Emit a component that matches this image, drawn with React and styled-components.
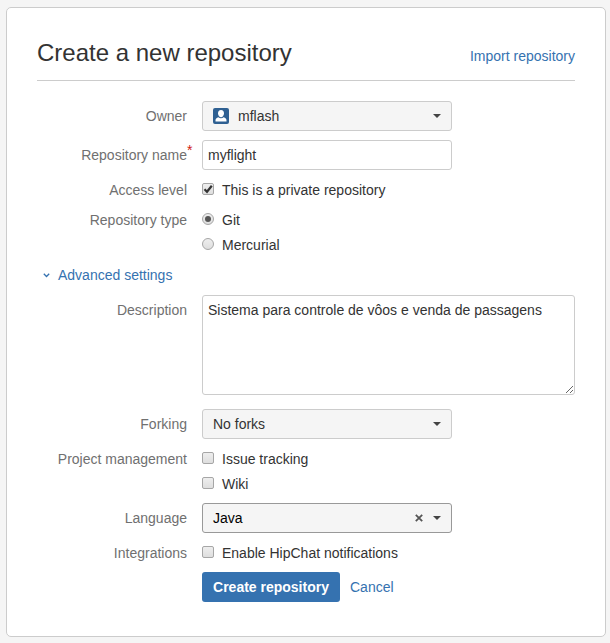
import React from "react";
import styled, { createGlobalStyle } from "styled-components";

const GlobalStyle = createGlobalStyle`
  * { box-sizing: border-box; }
  body {
    margin: 0;
    background: #f5f5f5;
    color: #333;
    font: 14px/20px "Liberation Sans", Arial, sans-serif;
  }
`;

const Page = styled.main`
  height: 643px;
  padding: 7px 4px 0 6px;
  overflow: hidden;
`;

const Card = styled.form`
  height: 630px;
  padding: 0 30px;
  background: #fff;
  border: 1px solid #ccc;
  border-radius: 5px;
`;

const Header = styled.header`
  display: flex;
  justify-content: space-between;
  height: 73px;
  border-bottom: 1px solid #ccc;
  margin-bottom: 20px;
`;

const Title = styled.h1`
  margin: 30px 0 0;
  font-size: 24px;
  font-weight: 400;
  line-height: 30px;
`;

const Link = styled.a`
  color: #3572b0;
  text-decoration: none;
  cursor: pointer;
`;

const HeaderLink = styled(Link)`
  margin-top: 38px;
`;

const Field = styled.div`
  display: grid;
  grid-template-columns: 150px 1fr;
  column-gap: 15px;
  margin-top: ${(p) => p.$space ?? 10}px;
`;

const Label = styled.div`
  position: relative;
  padding-top: ${(p) => p.$inset ?? 0}px;
  color: #707070;
  text-align: right;
  white-space: nowrap;
`;

const Required = styled.span`
  position: absolute;
  left: 100%;
  top: 0;
  color: #d01a10;
`;

const Options = styled.div`
  display: flex;
  flex-direction: column;
  gap: 5px;
`;

const OptionRow = styled.label`
  display: flex;
  align-items: center;
  gap: 8px;
  height: 20px;
`;

const Marker = styled.span`
  display: flex;
  align-items: center;
  justify-content: center;
  width: 12px;
  height: 12px;
  margin-top: -2px;
  border: 1px solid #a6a6a6;
  border-radius: ${(p) => (p.$round ? "50%" : "2px")};
  background: linear-gradient(#eee, #dedede);
`;

const Dot = styled.span`
  width: 6px;
  height: 6px;
  border-radius: 50%;
  background: #555;
`;

const SelectBox = styled.div`
  display: flex;
  align-items: center;
  width: 250px;
  height: 30px;
  padding: 0 10px;
  background: #f5f5f5;
  border: 1px solid ${(p) => (p.$active ? "#999" : "#ccc")};
  border-radius: 3px;
  color: ${(p) => (p.$active ? "#000" : "#333")};
`;

const SelectText = styled.span`
  flex: 1;
`;

const Avatar = styled.svg`
  width: 16px;
  height: 16px;
  margin-right: 9px;
`;

const Caret = styled.svg`
  width: 8px;
  height: 4px;
`;

const Clear = styled.svg`
  width: 8px;
  height: 8px;
  margin-right: 10px;
`;

const Input = styled.input`
  width: 250px;
  height: 30px;
  padding: 0 5px;
  border: 1px solid #ccc;
  border-radius: 3px;
  color: #333;
  font: inherit;
  outline: none;
`;

const TextArea = styled.textarea`
  display: block;
  width: 373px;
  height: 100px;
  padding: 4px 5px;
  border: 1px solid #ccc;
  border-radius: 3px;
  color: #333;
  font: inherit;
  outline: none;
  resize: both;
`;

const Disclosure = styled.div`
  display: flex;
  align-items: center;
  height: 20px;
  margin: 10px 0 0 6px;
  gap: 8px;
`;

const Chevron = styled.svg`
  width: 7px;
  height: 5px;
`;

const Actions = styled.div`
  display: flex;
  align-items: center;
  gap: 10px;
  margin: 9px 0 0 165px;
`;

const Submit = styled.button`
  width: 138px;
  height: 30px;
  padding: 0;
  background: #3572b0;
  border: 0;
  border-radius: 3px;
  color: #fff;
  font: inherit;
  font-weight: 700;
`;

function Option({ children, type = "checkbox", checked }) {
  const round = type === "radio";
  return (
    <OptionRow>
      <Marker $round={round} role={type} aria-checked={!!checked}>
        {checked && round && <Dot />}
        {checked && !round && (
          <svg width="10" height="10" viewBox="0 0 10 10" fill="none">
            <path d="M1.5 5.3 L4 7.8 L8.8 1.8" stroke="#333" strokeWidth="2.2" />
          </svg>
        )}
      </Marker>
      {children}
    </OptionRow>
  );
}

function Select({ value, icon, active }) {
  return (
    <SelectBox $active={active}>
      {icon}
      <SelectText>{value}</SelectText>
      {active && (
        <Clear viewBox="0 0 8 8">
          <path d="M0.8 0.8 L7.2 7.2 M7.2 0.8 L0.8 7.2" stroke="#555" strokeWidth="1.8" />
        </Clear>
      )}
      <Caret viewBox="0 0 8 4">
        <path d="M0 0 H8 L4 4 Z" fill="#444" />
      </Caret>
    </SelectBox>
  );
}

const userIcon = (
  <Avatar viewBox="0 0 16 16">
    <rect width="16" height="16" rx="2" fill="#2f6092" />
    <path
      d="M8 2 C6 2 5 3.3 5 5.2 C5 7.5 6.4 9.2 8 9.2 C9.6 9.2 11 7.5 11 5.2 C11 3.3 10 2 8 2 Z"
      fill="#fff"
    />
    <path
      d="M5.4 9.2 C3.5 9.8 2.5 10.8 2.5 12.4 V13.4 H13.5 V12.4 C13.5 10.8 12.5 9.8 10.6 9.2 C9.2 10.7 6.8 10.7 5.4 9.2 Z"
      fill="#fff"
    />
  </Avatar>
);

export default function App() {
  return (
    <Page>
      <GlobalStyle />
      <Card>
        <Header>
          <Title>Create a new repository</Title>
          <HeaderLink>Import repository</HeaderLink>
        </Header>
        <Field $space={0}>
          <Label $inset={5}>Owner</Label>
          <Select value="mflash" icon={userIcon} />
        </Field>
        <Field $space={9}>
          <Label $inset={5}>
            Repository name<Required>*</Required>
          </Label>
          <Input defaultValue="myflight" spellCheck={false} />
        </Field>
        <Field>
          <Label>Access level</Label>
          <Option checked>This is a private repository</Option>
        </Field>
        <Field>
          <Label>Repository type</Label>
          <Options>
            <Option type="radio" checked>Git</Option>
            <Option type="radio">Mercurial</Option>
          </Options>
        </Field>
        <Disclosure>
          <Chevron viewBox="0 0 7 5">
            <path d="M0.8 0.8 L3.5 3.5 L6.2 0.8" fill="none" stroke="#3572b0" strokeWidth="1.3" />
          </Chevron>
          <Link>Advanced settings</Link>
        </Disclosure>
        <Field>
          <Label $inset={5}>Description</Label>
          <TextArea
            defaultValue="Sistema para controle de vôos e venda de passagens"
            spellCheck={false}
          />
        </Field>
        <Field $space={14}>
          <Label $inset={5}>Forking</Label>
          <Select value="No forks" />
        </Field>
        <Field>
          <Label>Project management</Label>
          <Options>
            <Option>Issue tracking</Option>
            <Option>Wiki</Option>
          </Options>
        </Field>
        <Field $space={9}>
          <Label $inset={5}>Language</Label>
          <Select value="Java" active />
        </Field>
        <Field>
          <Label>Integrations</Label>
          <Option>Enable HipChat notifications</Option>
        </Field>
        <Actions>
          <Submit type="button">Create repository</Submit>
          <Link>Cancel</Link>
        </Actions>
      </Card>
    </Page>
  );
}
